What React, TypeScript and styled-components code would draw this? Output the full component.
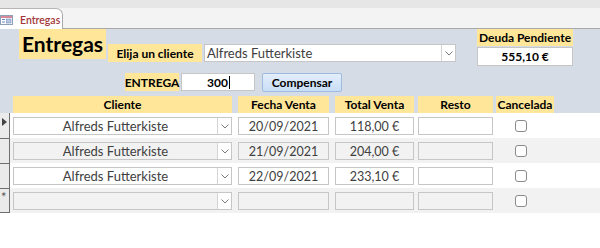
import React from 'react'
import styled, { createGlobalStyle } from 'styled-components'

const rows = [
  { cliente: 'Alfreds Futterkiste', fecha: '20/09/2021', total: '118,00 €', current: true },
  { cliente: 'Alfreds Futterkiste', fecha: '21/09/2021', total: '204,00 €' },
  { cliente: 'Alfreds Futterkiste', fecha: '22/09/2021', total: '233,10 €' },
  { cliente: '', fecha: '', total: '', isNew: true },
]

const Chevron = () => (
  <svg width='8' height='5' viewBox='0 0 8 5'>
    <path d='M0.5 0.5 L4 4 L7.5 0.5' fill='none' stroke='#7a7a7a' strokeWidth='1' />
  </svg>
)

const FormIcon = () => (
  <svg width='13' height='10' viewBox='0 0 13 10'>
    <rect x='0.5' y='0.5' width='12' height='9' fill='#fff' stroke='#8da0b8' />
    <rect x='1' y='1' width='11' height='2' fill='#d68a9a' />
    <rect x='2' y='4' width='3' height='1' fill='#6c8cc0' />
    <rect x='2' y='6.5' width='3' height='1' fill='#6c8cc0' />
    <rect x='6.5' y='4' width='4.5' height='4' fill='#b9c8dc' stroke='#6c8cc0' strokeWidth='0.6' />
  </svg>
)

export default function App() {
  return (
    <>
      <GlobalStyles />
      <Window>
        <TabBar>
          <TabRow>
            <Tab>
              <FormIcon />
              <TabTitle>Entregas</TabTitle>
            </Tab>
          </TabRow>
        </TabBar>
        <FormHeader>
          <TopRow>
            <TitleLabel>Entregas</TitleLabel>
            <Label $w={94} $ml={2} $mt={15}>Elija un cliente</Label>
            <TopCombo>
              <ComboText $align='left'>Alfreds Futterkiste</ComboText>
              <DropButton>
                <Chevron />
              </DropButton>
            </TopCombo>
            <DebtBlock>
              <Label $w={96} $h={17}>Deuda Pendiente</Label>
              <DebtValue>555,10 €</DebtValue>
            </DebtBlock>
          </TopRow>
          <PayRow>
            <Label $w={54}>ENTREGA</Label>
            <AmountInput>
              300<Caret />
            </AmountInput>
            <PayButton>Compensar</PayButton>
          </PayRow>
          <HeaderRow>
            <HeadCell $w={219} $ml={0}>Cliente</HeadCell>
            <HeadCell $w={91} $ml={6}>Fecha Venta</HeadCell>
            <HeadCell $w={79} $ml={6}>Total Venta</HeadCell>
            <HeadCell $w={75} $ml={4}>Resto</HeadCell>
            <HeadCell $w={58} $ml={3}>Cancelada</HeadCell>
          </HeaderRow>
        </FormHeader>
        <Detail>
          {rows.map((r, i) => (
            <Row key={i} $alt={i % 2 === 1}>
              <Selector $first={i === 0} $last={i === rows.length - 1}>
                {r.current && <Pointer />}
                {r.isNew && <NewMark>*</NewMark>}
              </Selector>
              <RowCombo>
                <ComboText $align='center'>{r.cliente}</ComboText>
                <DropButton>
                  <Chevron />
                </DropButton>
              </RowCombo>
              <Field $w={91} $ml={6}>{r.fecha}</Field>
              <Field $w={79} $ml={6}>{r.total}</Field>
              <Field $w={75} $ml={4} />
              <CheckCell>
                <Check />
              </CheckCell>
            </Row>
          ))}
        </Detail>
      </Window>
    </>
  )
}

const GlobalStyles = createGlobalStyle`
  * {
    margin: 0;
    padding: 0;
    box-sizing: border-box;
  }
  body {
    font-family: 'Lato', 'Liberation Sans', sans-serif;
    background: #ffffff;
    overflow: hidden;
  }
`
const Window = styled.div`
  width: 600px;
  height: 248px;
  background: #ffffff;
`
const TabBar = styled.div`
  background: #e6e6e6;
  padding-top: 8px;
`
const TabRow = styled.div`
  height: 21px;
  background: #f3f3f3;
  border-bottom: 1px solid #a9a9a9;
  display: flex;
`
const Tab = styled.div`
  width: 63px;
  height: 21px;
  background: #ffffff;
  border-top: 1px solid #b5b5b5;
  border-right: 1px solid #a9a9a9;
  border-top-right-radius: 7px;
  display: flex;
  align-items: center;
  gap: 7px;
  padding-top: 1px;
`
const TabTitle = styled.span`
  font-size: 10.5px;
  font-weight: 600;
  color: #a4373a;
`
const FormHeader = styled.div`
  height: 84px;
  background: #d6dce5;
`
const TopRow = styled.div`
  display: flex;
  align-items: flex-start;
  padding-left: 19px;
  height: 37px;
`
const TitleLabel = styled.div`
  width: 87px;
  height: 30px;
  background: #ffe699;
  font-size: 21px;
  font-weight: 700;
  line-height: 30px;
  padding-left: 3px;
  color: #000;
`
const Label = styled.div<{ $w: number; $h?: number; $ml?: number; $mt?: number }>`
  width: ${(p) => p.$w}px;
  height: ${(p) => p.$h ?? 18}px;
  margin-left: ${(p) => p.$ml ?? 0}px;
  margin-top: ${(p) => p.$mt ?? 0}px;
  background: #ffe699;
  font-size: 12px;
  font-weight: 700;
  color: #000;
  display: flex;
  align-items: center;
  justify-content: center;
  white-space: nowrap;
`
const TopCombo = styled.div`
  width: 252px;
  height: 18px;
  margin-left: 2px;
  margin-top: 15px;
  background: #ffffff;
  border: 1px solid #c6c6c6;
  display: flex;
`
const ComboText = styled.div<{ $align: 'left' | 'center' }>`
  flex: 1;
  font-size: 13px;
  line-height: 16px;
  color: #404040;
  text-align: ${(p) => p.$align};
  padding-left: ${(p) => (p.$align === 'left' ? 2 : 0)}px;
  white-space: nowrap;
  overflow: hidden;
`
const DropButton = styled.div`
  width: 14px;
  background: #ffffff;
  border-left: 1px solid #d4d4d4;
  display: flex;
  align-items: center;
  justify-content: center;
`
const DebtBlock = styled.div`
  margin-left: 21px;
  display: flex;
  flex-direction: column;
`
const DebtValue = styled.div`
  width: 96px;
  height: 19px;
  margin-top: 1px;
  background: #ffffff;
  border: 1px solid #c6c6c6;
  font-size: 12px;
  font-weight: 700;
  color: #000;
  display: flex;
  align-items: center;
  justify-content: center;
`
const PayRow = styled.div`
  display: flex;
  align-items: flex-start;
  padding-left: 125px;
  margin-top: 7px;
  height: 19px;
`
const AmountInput = styled.div`
  width: 74px;
  height: 18px;
  margin-left: 2px;
  background: #ffffff;
  border: 1px solid #c6c6c6;
  font-size: 12px;
  font-weight: 700;
  color: #000;
  display: flex;
  align-items: center;
  justify-content: center;
  padding-left: 1px;
`
const Caret = styled.span`
  display: inline-block;
  width: 1px;
  height: 13px;
  background: #000;
  margin-left: 1px;
`
const PayButton = styled.div`
  width: 80px;
  height: 19px;
  margin-left: 7px;
  background: linear-gradient(#e3eefb, #c9def5);
  border: 1px solid #9dbbe0;
  border-radius: 2px;
  font-size: 12px;
  font-weight: 700;
  color: #000;
  display: flex;
  align-items: center;
  justify-content: center;
`
const HeaderRow = styled.div`
  display: flex;
  padding-left: 13px;
  margin-top: 4px;
`
const HeadCell = styled.div<{ $w: number; $ml: number }>`
  width: ${(p) => p.$w}px;
  height: 17px;
  margin-left: ${(p) => p.$ml}px;
  background: #ffe699;
  font-size: 12px;
  font-weight: 700;
  color: #000;
  display: flex;
  align-items: center;
  justify-content: center;
  white-space: nowrap;
`
const Detail = styled.div`
  display: flex;
  flex-direction: column;
`
const Row = styled.div<{ $alt: boolean }>`
  height: 25px;
  background: ${(p) => (p.$alt ? '#f2f2f2' : '#ffffff')};
  display: flex;
  align-items: flex-start;
`
const Selector = styled.div<{ $first: boolean; $last: boolean }>`
  width: 10px;
  height: 25px;
  background: #ebebeb;
  border-right: 1px solid #6f6f6f;
  border-top: ${(p) => (p.$first ? 'none' : '1px solid #6f6f6f')};
  border-bottom: ${(p) => (p.$last ? '1px solid #6f6f6f' : 'none')};
  position: relative;
`
const Pointer = styled.div`
  position: absolute;
  left: 2px;
  top: 5px;
  width: 0;
  height: 0;
  border-top: 4px solid transparent;
  border-bottom: 4px solid transparent;
  border-left: 5px solid #444;
`
const NewMark = styled.div`
  position: absolute;
  left: 1px;
  top: 2px;
  font-size: 13px;
  line-height: 13px;
  color: #555;
`
const RowCombo = styled.div`
  width: 219px;
  height: 18px;
  margin-left: 3px;
  margin-top: 4px;
  border: 1px solid #c6c6c6;
  display: flex;
`
const Field = styled.div<{ $w: number; $ml: number }>`
  width: ${(p) => p.$w}px;
  height: 18px;
  margin-left: ${(p) => p.$ml}px;
  margin-top: 4px;
  border: 1px solid #c6c6c6;
  font-size: 12.5px;
  color: #404040;
  display: flex;
  align-items: center;
  justify-content: center;
`
const CheckCell = styled.div`
  width: 58px;
  margin-left: 3px;
  padding-left: 19px;
  padding-top: 7px;
`
const Check = styled.div`
  width: 12px;
  height: 12px;
  background: #ffffff;
  border: 1px solid #8a8a8a;
  border-radius: 3px;
`
